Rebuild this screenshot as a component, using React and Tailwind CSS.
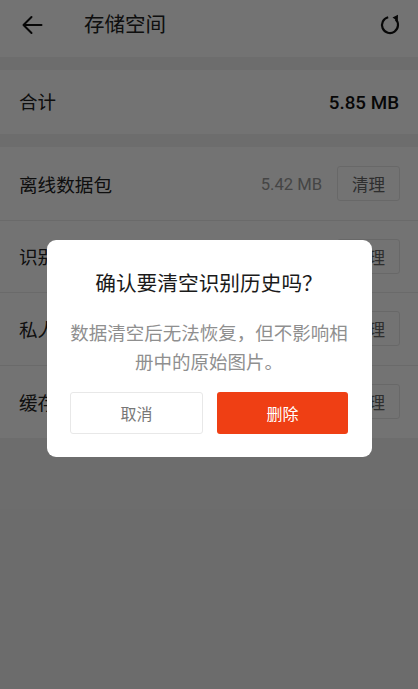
import React from 'react';

const rows = [
  { name: '离线数据包', size: '5.42 MB' },
  { name: '识别历史', size: '0.21 MB' },
  { name: '私人相册', size: '0.12 MB' },
  { name: '缓存数据', size: '0.10 MB' },
];

const App = () => {
  return (
    <div className="relative h-[689px] w-[418px] overflow-hidden bg-[#f1f1f1] font-['Roboto','Noto_Sans_CJK_SC',sans-serif]">
      {/* Page behind the dialog */}
      <div className="flex h-[57px] items-center bg-white pb-[8px] pl-[21px] pr-[17px]">
        <svg width="22" height="22" viewBox="0 0 22 22" fill="none" stroke="#111" strokeWidth="2" strokeLinecap="round" strokeLinejoin="round" className="mr-[41px]">
          <path d="M20.5 11H2.5M10.5 3l-8 8 8 8" />
        </svg>
        <span className="pt-[2px] text-[20.5px] text-[#222]">存储空间</span>
        <svg width="22" height="22" viewBox="0 0 22 22" fill="none" className="ml-auto">
          <path d="M9.2 3.2A8 8 0 1 0 16.6 5.3" stroke="#111" strokeWidth="2.2" />
          <path d="M13.5 3.6L19 .8l-.2 6.4z" fill="#111" />
        </svg>
      </div>

      <div className="mt-[13px] flex h-[64px] items-center justify-between bg-white px-[19px]">
        <span className="pt-[4px] text-[18.5px] text-[#222]">合计</span>
        <span className="pt-[2px] text-[18.8px] font-medium text-[#111]">5.85 MB</span>
      </div>

      <div className="mt-[13px] bg-white pt-[1px]">
        {rows.map((row) => (
          <div key={row.name} className="flex h-[72.5px] items-center border-b border-[#ececec] pl-[19px] pr-[18px] last:border-b-0">
            <span className="pt-[6px] text-[18.6px] text-[#222]">{row.name}</span>
            <span className="ml-auto mr-[15px] pt-[4px] text-[16.6px] text-[#999]">{row.size}</span>
            <button className="h-[35px] w-[63px] rounded-[3px] border border-[#e6e6e6] pt-[5px] text-[16.5px] leading-[22px] text-[#666]">清理</button>
          </div>
        ))}
      </div>

      {/* Dimmed overlay and dialog */}
      <div className="absolute inset-0 bg-black/55">
        <div className="absolute left-[46.5px] top-[240px] flex h-[217px] w-[325px] flex-col rounded-[9px] bg-white px-[23.5px] pt-[28px]">
          <h2 className="text-center text-[20.7px] leading-[32px] font-normal text-[#1a1a1a]">{'确认要清空识别历史吗\uFF1F'}</h2>
          <p className="mt-[20px] text-center text-[18.5px] leading-[29px] text-[#8f8f8f]">{'数据清空后无法恢复\uFF0C但不影响相册中的原始图片。'}</p>
          <div className="mt-[14px] flex gap-[14px]">
            <button className="h-[42px] flex-1 rounded-[3px] border border-[#e8e8e8] pt-[4px] text-[16px] text-[#777]">取消</button>
            <button className="h-[42px] flex-1 rounded-[3px] bg-[#ef3f14] pt-[4px] text-[16px] text-white">删除</button>
          </div>
        </div>
      </div>
    </div>
  );
};

export default App;
